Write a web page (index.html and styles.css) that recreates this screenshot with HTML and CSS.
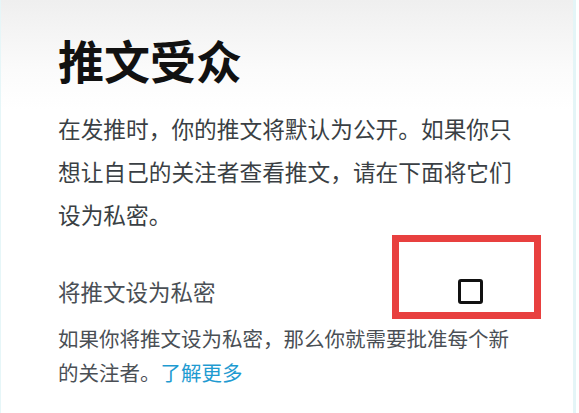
FILE: index.html
```html
<!DOCTYPE html>
<html lang="zh-CN">
<head>
<meta charset="utf-8">
<link rel="stylesheet" href="styles.css">
</head>
<body>
<div class="page">
  <div class="content">
    <h1 class="title">推文受众</h1>
    <p class="intro">在发推时，你的推文将默认为公开。如果你只想让自己的关注者查看推文，请在下面将它们设为私密。</p>
    <div class="row">
      <span class="label">将推文设为私密</span>
      <span class="check-area">
        <span class="checkbox"></span>
      </span>
      <span class="highlight"></span>
    </div>
    <p class="note">如果你将推文设为私密，那么你就需要批准每个新的关注者。<a class="link" href="#">了解更多</a></p>
  </div>
</div>
</body>
</html>
```

FILE: styles.css
```css
html, body {
  margin: 0;
  padding: 0;
  background: #ffffff;
}
body {
  width: 579px;
  height: 413px;
  overflow: hidden;
  font-family: "Noto Sans CJK SC", "Noto Sans", sans-serif;
}
.page {
  height: 413px;
  box-sizing: border-box;
  background: linear-gradient(to bottom, #efefef 0px, #fbfbfb 70px, #ffffff 110px);
  border-left: 1px solid #e6f6f8;
  border-right: 3px solid #e4f5f7;
  margin-right: 3px;
}
.content {
  padding: 31px 0 0 57px;
  width: 470px;
}
.title {
  margin: 0;
  font-size: 46px;
  line-height: 56px;
  font-weight: 700;
  color: #111111;
}
.intro {
  margin: 20px 0 0 0;
  font-size: 22.7px;
  line-height: 43px;
  color: #3a3f44;
  width: 465px;
}
.row {
  position: relative;
  display: flex;
  align-items: center;
  margin-top: 35px;
  height: 40px;
}
.label {
  font-size: 22.5px;
  color: #4a4f55;
  line-height: 40px;
}
.check-area {
  margin-left: auto;
  margin-right: 45px;
  display: flex;
  align-items: center;
}
.checkbox {
  flex-shrink: 0;
  box-sizing: border-box;
  width: 25px;
  height: 25px;
  border: 3px solid #111111;
  border-radius: 3px;
  display: block;
}
.highlight {
  position: absolute;
  left: 334px;
  top: -36px;
  width: 135px;
  height: 70px;
  border: 7px solid #e8403f;
}
.note {
  margin: 10px 0 0 0;
  font-size: 20.5px;
  line-height: 34px;
  color: #4a4f55;
  width: 460px;
}
.link {
  color: #1f9bd1;
  text-decoration: none;
}
```
